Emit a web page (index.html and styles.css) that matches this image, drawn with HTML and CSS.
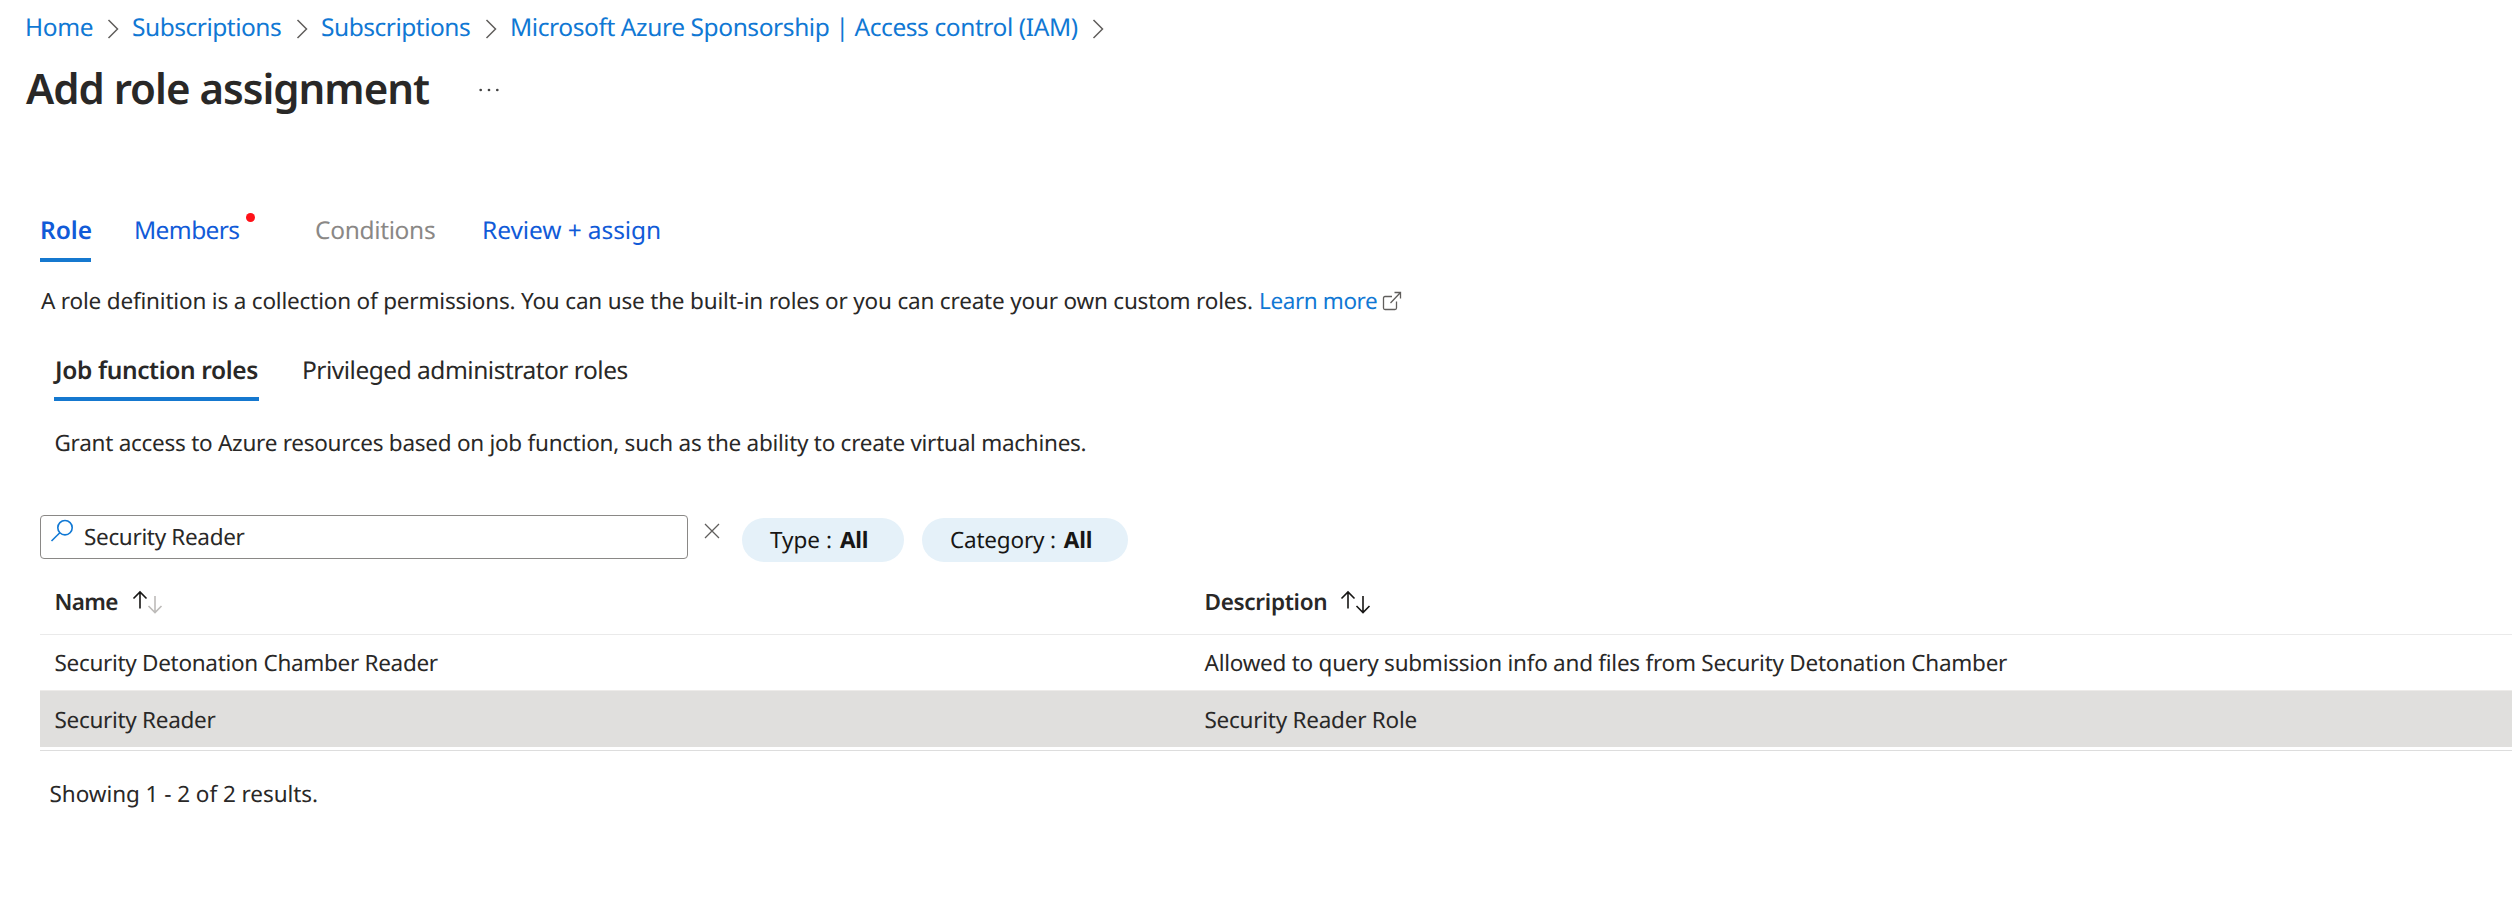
FILE: index.html
```html
<!DOCTYPE html>
<html lang="en">
<head>
<meta charset="utf-8">
<title>Add role assignment</title>
<link rel="stylesheet" href="styles.css">
</head>
<body>
<nav class="crumbs">
  <a class="crumb crumb-home">Home</a>
  <svg class="chevron" viewBox="0 0 12 20"><path d="M1.5 1 10.5 10 1.5 19"/></svg>
  <a class="crumb">Subscriptions</a>
  <svg class="chevron" viewBox="0 0 12 20"><path d="M1.5 1 10.5 10 1.5 19"/></svg>
  <a class="crumb">Subscriptions</a>
  <svg class="chevron" viewBox="0 0 12 20"><path d="M1.5 1 10.5 10 1.5 19"/></svg>
  <a class="crumb crumb-iam">Microsoft Azure Sponsorship | Access control (IAM)</a>
  <svg class="chevron" viewBox="0 0 12 20"><path d="M1.5 1 10.5 10 1.5 19"/></svg>
</nav>
<header class="title-row">
  <h1 class="title">Add role assignment</h1>
  <svg class="more" viewBox="0 0 20 4"><circle cx="1.7" cy="2" r="1.35"/><circle cx="10" cy="2" r="1.35"/><circle cx="18.3" cy="2" r="1.35"/></svg>
</header>
<main class="content">
  <div class="tabs">
    <a class="tab tab-role active">Role</a>
    <a class="tab tab-members">Members<span class="dot"></span></a>
    <a class="tab tab-conditions">Conditions</a>
    <a class="tab tab-review">Review + assign</a>
  </div>
  <p class="intro"><span class="intro-text">A role definition is a collection of permissions. You can use the built-in roles or you can create your own custom roles.</span><a class="learn">Learn more</a><svg class="external" viewBox="0 0 20 20"><path d="M10 5.500H3Q1.500 5.500 1.500 7V17Q1.500 18.500 3 18.500H13Q14.500 18.500 14.500 17V10.500M8.500 12 18.500 1.500M12.500 1.500H18.500V7.500"/></svg></p>
  <div class="subtabs">
    <a class="subtab subtab-job active">Job function roles</a>
    <a class="subtab subtab-privileged">Privileged administrator roles</a>
  </div>
  <p class="grant">Grant access to Azure resources based on job function, such as the ability to create virtual machines.</p>
  <div class="filters">
    <div class="search">
      <svg class="magnifier" viewBox="0 0 24 24"><circle cx="15" cy="8.700" r="7.200"/><path d="M9.800 13.800 1.500 22"/></svg>
      <span class="query">Security Reader</span>
    </div>
    <svg class="clear" viewBox="0 0 16 16"><path d="M1 1 15 15M15 1 1 15"/></svg>
    <div class="pill pill-type"><span>Type :</span><b>All</b></div>
    <div class="pill pill-category"><span>Category :</span><b>All</b></div>
  </div>
  <div class="table">
    <div class="row head">
      <div class="cell"><span class="col-name">Name</span><svg class="sort" viewBox="0 0 30 24"><path d="M8 2V18.500M1.500 8.500 8 2 14.500 8.500"/><path class="muted" d="M23 6V22.500M16.500 16 23 22.500 29.500 16"/></svg></div>
      <div class="cell"><span class="col-desc">Description</span><svg class="sort" viewBox="0 0 30 24"><path d="M8 2V18.500M1.500 8.500 8 2 14.500 8.500"/><path d="M23 6V22.500M16.500 16 23 22.500 29.500 16"/></svg></div>
    </div>
    <div class="row">
      <div class="cell">Security Detonation Chamber Reader</div>
      <div class="cell description">Allowed to query submission info and files from Security Detonation Chamber</div>
    </div>
    <div class="row selected">
      <div class="cell">Security Reader</div>
      <div class="cell description">Security Reader Role</div>
    </div>
  </div>
  <p class="results">Showing 1 - 2 of 2 results.</p>
</main>
</body>
</html>
```

FILE: styles.css
```css
* { box-sizing: border-box; }
body {
  margin: 0;
  padding-top: 8px;
  background: #fff;
  color: #292827;
  font: 22.5px/40px "Noto Sans", "Open Sans", sans-serif;
  letter-spacing: -0.26px;
  text-rendering: geometricPrecision;
  white-space: nowrap;
  overflow: hidden;
}
p, h1 { margin: 0; }
svg { display: block; flex: none; fill: none; overflow: visible; }

.crumbs { display: flex; align-items: center; height: 40px; padding-left: 25px; }
.crumb { flex: none; width: 152px; color: #1078d4; font-size: 24.5px; letter-spacing: -0.48px; }
.crumb-home { width: 70px; letter-spacing: -0.34px; }
.crumb-iam { width: 570px; letter-spacing: -0.41px; }
.chevron { width: 12px; height: 20px; margin: 2px 13px 0 12px; stroke: #605e5c; stroke-width: 1.5; }

.title-row { display: flex; align-items: center; height: 60px; margin-top: 11px; padding-left: 26px; }
.title { width: 453px; font-size: 42px; line-height: 60px; font-weight: 600; letter-spacing: -1px; }
.more { width: 20px; height: 4px; margin-top: 1px; fill: #444; }

.content { padding: 92px 0 0 40px; }
.tabs { display: flex; height: 51px; font-size: 24.5px; }
.tab { position: relative; color: #115bd8; }
.tab.active { border-bottom: 4px solid #1578cf; font-weight: 600; }
.tab-role { width: 51px; letter-spacing: 0; }
.tab-members { margin-left: 43px; width: 181px; letter-spacing: -0.6px; }
.dot { position: absolute; left: 112px; top: 2px; width: 9px; height: 9px; border-radius: 50%; background: #ff1118; }
.tab-conditions { width: 167px; color: #8a8886; letter-spacing: -0.34px; }
.tab-review { letter-spacing: -0.09px; }

.intro { display: flex; align-items: center; height: 40px; margin-top: 19px; }
.intro-text { width: 1219px; padding-left: 1px; letter-spacing: -0.184px; }
.learn { width: 123px; color: #1078d4; letter-spacing: -0.4px; }
.external { width: 20px; height: 20px; margin-top: -1px; stroke: #605e5c; stroke-width: 1.3; }

.subtabs { display: flex; height: 50px; margin: 30px 0 0 14px; font-size: 24.5px; }
.subtab-job { width: 205px; letter-spacing: -0.37px; padding-left: 1px; }
.subtab.active { border-bottom: 4px solid #1578cf; font-weight: 600; }
.subtab-privileged { margin-left: 43px; letter-spacing: -0.49px; }
.grant { margin: 22px 0 0 14.5px; }

.filters { display: flex; height: 53px; margin-top: 52px; }
.search { display: flex; flex: none; width: 648px; height: 44px; border: 1px solid #8a8886; border-radius: 4px; }
.magnifier { width: 24px; height: 24px; margin: 3px 10px 0 9px; stroke: #1078d4; stroke-width: 1.6; }
.query { line-height: 41px; letter-spacing: -0.33px; }
.clear { width: 16px; height: 16px; margin: 8px 22px 0 16px; stroke: #605e5c; stroke-width: 1.3; }
.pill { display: flex; flex: none; gap: 8px; height: 44px; margin-top: 3px; padding-left: 28px; border-radius: 22px; background: #e5f1f9; color: #171615; line-height: 44px; letter-spacing: 0; }
.pill-type { width: 162px; margin-right: 18px; }
.pill-category { width: 206px; letter-spacing: -0.2px; }
.pill b { font-weight: 700; letter-spacing: -0.2px; }

.table { border-bottom: 1px solid #dddddd; padding-bottom: 3px; }
.row { display: grid; grid-template-columns: 1150px 1fr; align-items: center; height: 56px; padding: 1px 0 0 14.5px; border-bottom: 1px solid #edebe9; letter-spacing: -0.3px; }
.row.head { height: 67px; padding-top: 2px; font-weight: 600; border-bottom-color: #eaeaea; }
.row.selected { background: #e0dfdd; border-bottom: 0; padding-top: 2px; }
.cell { display: flex; align-items: center; }
.description { letter-spacing: -0.25px; }
.col-name { width: 77px; letter-spacing: -0.58px; }
.col-desc { width: 135px; letter-spacing: -0.29px; }
.sort { width: 30px; height: 24px; margin-top: -1px; stroke: #171615; stroke-width: 1.6; }
.sort .muted { stroke: #bdbbb9; }
.results { margin: 23px 0 0 9.5px; letter-spacing: -0.05px; }
```
